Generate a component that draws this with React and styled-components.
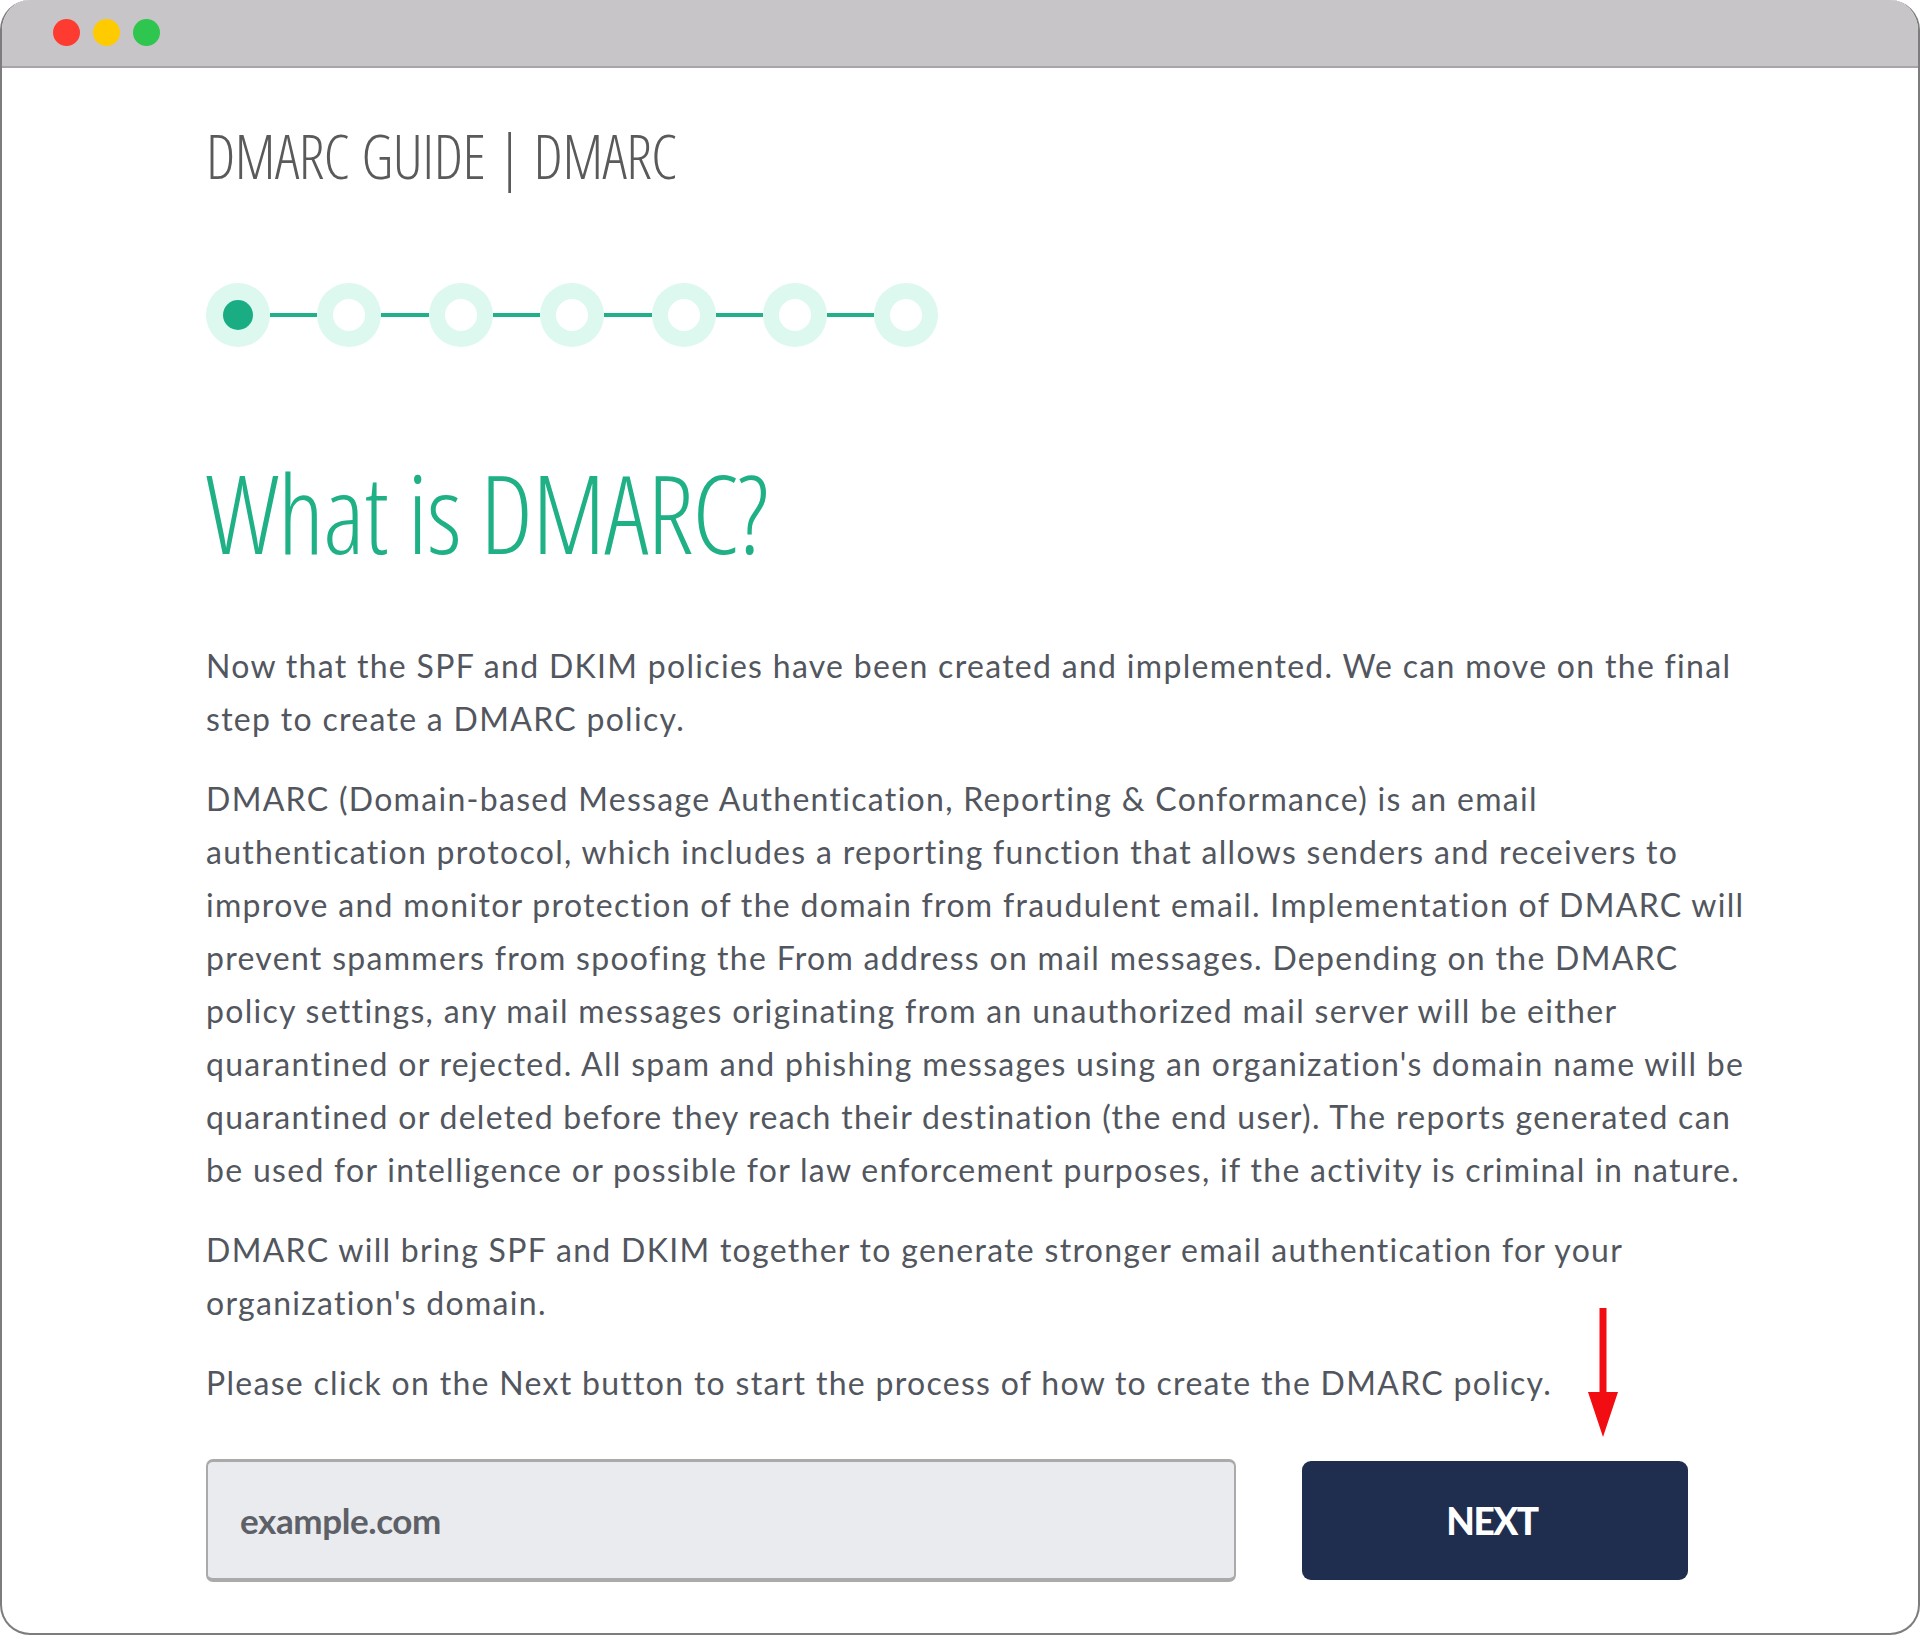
import React from 'react'
import styled, { createGlobalStyle } from 'styled-components'

const GlobalStyle = createGlobalStyle`
  html, body {
    margin: 0;
    padding: 0;
    background: #ffffff;
  }
  * { box-sizing: border-box; }
`

const Window = styled.div`
  width: 1920px;
  height: 1635px;
  border: 2px solid #7d7d7d;
  border-top: none;
  border-radius: 30px;
  overflow: hidden;
  background: #ffffff;
  display: flex;
  flex-direction: column;
`

const TitleBar = styled.div`
  height: 68px;
  flex-shrink: 0;
  background: #c8c5c9;
  border-bottom: 2px solid #a7a5a8;
  display: flex;
  align-items: center;
  gap: 13px;
  padding-left: 51px;
  padding-bottom: 2px;
`

const Light = styled.span`
  width: 27px;
  height: 27px;
  border-radius: 50%;
  background: ${props => props.color};
`

const Content = styled.div`
  padding: 58px 0 0 204px;
  display: flex;
  flex-direction: column;
`

const GuideTitle = styled.h1`
  margin: 0;
  font-family: 'Open Sans', sans-serif;
  font-stretch: 75%;
  font-weight: 300;
  font-size: 60px;
  line-height: 1;
  color: #5a5a5a;
  letter-spacing: -0.5px;
  word-spacing: 2px;
`

const Stepper = styled.div`
  display: flex;
  align-items: center;
  margin-top: 97px;
`

const Step = styled.span`
  width: 64px;
  height: 64px;
  border-radius: 50%;
  background: #dcf8ef;
  display: flex;
  align-items: center;
  justify-content: center;

  &::after {
    content: '';
    width: ${props => props.active ? '30px' : '32px'};
    height: ${props => props.active ? '30px' : '32px'};
    border-radius: 50%;
    background: ${props => props.active ? '#1aad84' : '#ffffff'};
  }
`

const Connector = styled.span`
  width: 47.4px;
  height: 4px;
  background: #21b088;
`

const Heading = styled.h2`
  margin: 112px 0 0;
  font-family: 'Open Sans', sans-serif;
  font-stretch: 75%;
  font-weight: 300;
  font-size: 108px;
  line-height: 1;
  color: #1fb185;
  letter-spacing: -0.8px;
`

const Text = styled.div`
  margin-top: 72px;
  width: 1556px;
  font-family: 'Lato', sans-serif;
  font-size: 32px;
  line-height: 53px;
  letter-spacing: 1.3px;
  color: #52565e;

  p {
    margin: 0 0 27px;
  }
`

const Form = styled.div`
  display: flex;
  align-items: center;
  margin-top: 23px;
`

const DomainInput = styled.input`
  width: 1030px;
  height: 123px;
  background: #e9ebee;
  border: 2px solid #aaaaaa;
  border-top-width: 3px;
  border-bottom-width: 4px;
  border-radius: 7px;
  padding: 0 32px;
  font-family: 'Lato', sans-serif;
  font-weight: 700;
  font-size: 35px;
  letter-spacing: -0.4px;
  color: #5d6066;
  outline: none;

  &::placeholder {
    color: #5d6066;
  }
`

const ButtonWrap = styled.div`
  position: relative;
  margin-left: 66px;
`

const NextButton = styled.button`
  width: 386px;
  height: 119px;
  background: #1f2d4e;
  border: none;
  border-radius: 9px;
  padding: 0 6px 0 0;
  color: #ffffff;
  font-family: 'Lato', sans-serif;
  font-weight: 900;
  font-size: 37px;
  letter-spacing: -1.5px;
  cursor: pointer;
`

const Arrow = styled.svg`
  position: absolute;
  left: 285px;
  top: -153px;
`

const App = () => {
  return (
    <>
      <GlobalStyle />
      <Window>
        <TitleBar>
          <Light color="#fe3b30" />
          <Light color="#fecb00" />
          <Light color="#2ec64f" />
        </TitleBar>
        <Content>
          <GuideTitle>DMARC GUIDE | DMARC</GuideTitle>
          <Stepper>
            <Step active />
            <Connector />
            <Step />
            <Connector />
            <Step />
            <Connector />
            <Step />
            <Connector />
            <Step />
            <Connector />
            <Step />
            <Connector />
            <Step />
          </Stepper>
          <Heading>What is DMARC?</Heading>
          <Text>
            <p>Now that the SPF and DKIM policies have been created and implemented. We can move on the final step to create a DMARC policy.</p>
            <p>DMARC (Domain-based Message Authentication, Reporting &amp; Conformance) is an email authentication protocol, which includes a reporting function that allows senders and receivers to improve and monitor protection of the domain from fraudulent email. Implementation of DMARC will prevent spammers from spoofing the From address on mail messages. Depending on the DMARC policy settings, any mail messages originating from an unauthorized mail server will be either quarantined or rejected. All spam and phishing messages using an organization's domain name will be quarantined or deleted before they reach their destination (the end user). The reports generated can be used for intelligence or possible for law enforcement purposes, if the activity is criminal in nature.</p>
            <p>DMARC will bring SPF and DKIM together to generate stronger email authentication for your organization's domain.</p>
            <p>Please click on the Next button to start the process of how to create the DMARC policy.</p>
          </Text>
          <Form>
            <DomainInput placeholder="example.com" />
            <ButtonWrap>
              <NextButton>NEXT</NextButton>
              <Arrow width="32" height="130" viewBox="0 0 32 130">
                <rect x="12.5" y="0" width="7" height="90" fill="#f20d12" />
                <polygon points="1,84 31,84 16,129" fill="#f20d12" />
              </Arrow>
            </ButtonWrap>
          </Form>
        </Content>
      </Window>
    </>
  )
}

export default App
